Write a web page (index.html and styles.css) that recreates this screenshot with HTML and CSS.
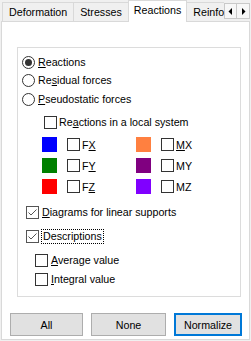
FILE: index.html
```html
<!DOCTYPE html>
<html lang="en">
<head>
  <meta charset="UTF-8">
  <title>Reactions</title>
  <link rel="stylesheet" href="styles.css">
</head>
<body>
  <div class="tabbar">
    <div class="tabs">
      <div class="tab">Deformation</div>
      <div class="tab">Stresses</div>
      <div class="tab active">Reactions</div>
      <div class="tab">Reinforcement</div>
    </div>
    <div class="scroller">
      <span class="arrow"><svg width="5" height="7" viewBox="0 0 5 7"><path d="M4 0 L4 7 L0.5 3.5 Z" fill="#000"/></svg></span>
      <span class="arrow"><svg width="5" height="7" viewBox="0 0 5 7"><path d="M1 0 L1 7 L4.5 3.5 Z" fill="#000"/></svg></span>
    </div>
  </div>

  <div class="panel">
    <div class="group">
      <div class="radios">
        <div class="row opt-radio"><span class="radio checked"></span><span><u>R</u>eactions</span></div>
        <div class="row opt-radio"><span class="radio"></span><span>Re<u>s</u>idual forces</span></div>
        <div class="row opt-radio"><span class="radio"></span><span><u>P</u>seudostatic forces</span></div>
      </div>

      <div class="row opt-local"><span class="check"></span><span>Re<u>a</u>ctions in a local system</span></div>

      <div class="colors">
        <div class="cell"><span class="swatch" style="background:#0000ff"></span><span class="check"></span><span>F<u>X</u></span></div>
        <div class="cell"><span class="swatch" style="background:#ff8040"></span><span class="check"></span><span><u>M</u>X</span></div>
        <div class="cell"><span class="swatch" style="background:#008000"></span><span class="check"></span><span>F<u>Y</u></span></div>
        <div class="cell"><span class="swatch" style="background:#800080"></span><span class="check"></span><span>MY</span></div>
        <div class="cell"><span class="swatch" style="background:#ff0000"></span><span class="check"></span><span>F<u>Z</u></span></div>
        <div class="cell"><span class="swatch" style="background:#8000ff"></span><span class="check"></span><span>MZ</span></div>
      </div>

      <div class="row opt-main diagrams"><span class="check checked"><svg width="11" height="11" viewBox="0 0 11 11"><path d="M1.5 5.5 L4 8 L9.5 2.5" fill="none" stroke="#555" stroke-width="1"/></svg></span><span><u>D</u>iagrams for linear supports</span></div>
      <div class="row opt-main descr"><span class="check checked"><svg width="11" height="11" viewBox="0 0 11 11"><path d="M1.5 5.5 L4 8 L9.5 2.5" fill="none" stroke="#555" stroke-width="1"/></svg></span><span class="focus">Descriptions</span></div>

      <div class="row opt-sub average"><span class="check"></span><span><u>A</u>verage value</span></div>
      <div class="row opt-sub integral"><span class="check"></span><span><u>I</u>ntegral value</span></div>
    </div>

    <div class="buttons">
      <button class="btn btn-all">All</button>
      <button class="btn btn-none">None</button>
      <button class="btn btn-norm">Normalize</button>
    </div>
  </div>
</body>
</html>
```

FILE: styles.css
```css
* {
  box-sizing: border-box;
}
body {
  margin: 0;
  width: 251px;
  height: 341px;
  overflow: hidden;
  background: #f0f0f0;
  font-family: 'Liberation Sans', Arial, sans-serif;
  font-size: 10.7px;
  color: #000;
}
u {
  text-underline-offset: 1px;
}

/* tab strip */
.tabbar {
  display: flex;
  height: 22px;
}
.tabs {
  display: flex;
  align-items: flex-end;
  width: 222px;
  height: 22px;
  margin-left: 2px;
  overflow: hidden;
}
.tab {
  flex-shrink: 0;
  height: 19px;
  margin-bottom: 1px;
  padding: 0 6px;
  line-height: 18px;
  border: 1px solid #d9d9d9;
  border-bottom: none;
  background: #f0f0f0;
  white-space: nowrap;
}
.tab + .tab {
  margin-left: -1px;
}
.tab.active {
  position: relative;
  z-index: 1;
  height: 22px;
  margin-bottom: 0;
  padding: 0 5px;
  line-height: 19px;
  background: #fff;
}
.scroller {
  display: flex;
  margin-top: 3px;
}
.arrow {
  display: flex;
  align-items: center;
  justify-content: center;
  width: 13px;
  height: 16px;
  border: 1px solid #c9c9c9;
  background: #f7f7f7;
}
.arrow + .arrow {
  margin-left: -1px;
  width: 14px;
}

/* page */
.panel {
  display: flex;
  flex-direction: column;
  width: 249px;
  height: 319px;
  margin: -1px 0 0 1px;
  border: 1px solid #d9d9d9;
  background: #fff;
}
.group {
  display: flex;
  flex-direction: column;
  width: 224px;
  height: 250px;
  margin: 25px 0 0 15px;
  padding-top: 5px;
  border: 1px solid #dcdcdc;
}
.row {
  display: flex;
  align-items: center;
  height: 18px;
  white-space: nowrap;
}
.radio {
  width: 13px;
  height: 13px;
  margin-right: 3px;
  border: 1px solid #333;
  border-radius: 50%;
  background: #fff;
  display: flex;
  align-items: center;
  justify-content: center;
}
.radio.checked::after {
  content: "";
  width: 7px;
  height: 7px;
  border-radius: 50%;
  background: #333;
}
.check {
  flex-shrink: 0;
  width: 13px;
  height: 13px;
  margin-right: 3px;
  border: 1px solid #333;
  background: #fff;
  display: flex;
  align-items: center;
  justify-content: center;
}
.check.checked {
  border-color: #555;
}

.opt-radio {
  padding-left: 4px;
}
.radios .row:last-child {
  margin-top: 1px;
}
.opt-local {
  margin-top: 5px;
  padding-left: 26px;
}
.opt-local .check {
  margin-right: 2px;
}

.colors {
  display: grid;
  grid-template-columns: 94px 1fr;
  grid-auto-rows: 21px;
  margin-top: 3px;
  padding-left: 24px;
}
.cell {
  display: flex;
  align-items: center;
}
.swatch {
  width: 15px;
  height: 15px;
  margin-right: 10px;
}
.cell .check {
  margin-right: 2px;
}

.opt-main {
  padding-left: 8px;
}
.diagrams {
  margin-top: 6px;
}
.descr {
  margin-top: 6px;
}
.focus {
  padding: 0 1px;
  margin-left: -1px;
  line-height: 13px;
  border: 1px dotted #000;
}
.opt-sub {
  padding-left: 17px;
}
.average {
  margin-top: 6px;
}
.integral {
  margin-top: 1px;
}

/* buttons */
.buttons {
  display: flex;
  gap: 8px;
  margin: 16px 0 0 8px;
}
.btn {
  height: 23px;
  padding: 0;
  border: 1px solid #adadad;
  background: #e1e1e1;
  font: inherit;
  color: #000;
}
.btn-all {
  width: 73px;
}
.btn-none {
  width: 75px;
}
.btn-norm {
  width: 68px;
  border: 2px solid #0078d7;
}
```
